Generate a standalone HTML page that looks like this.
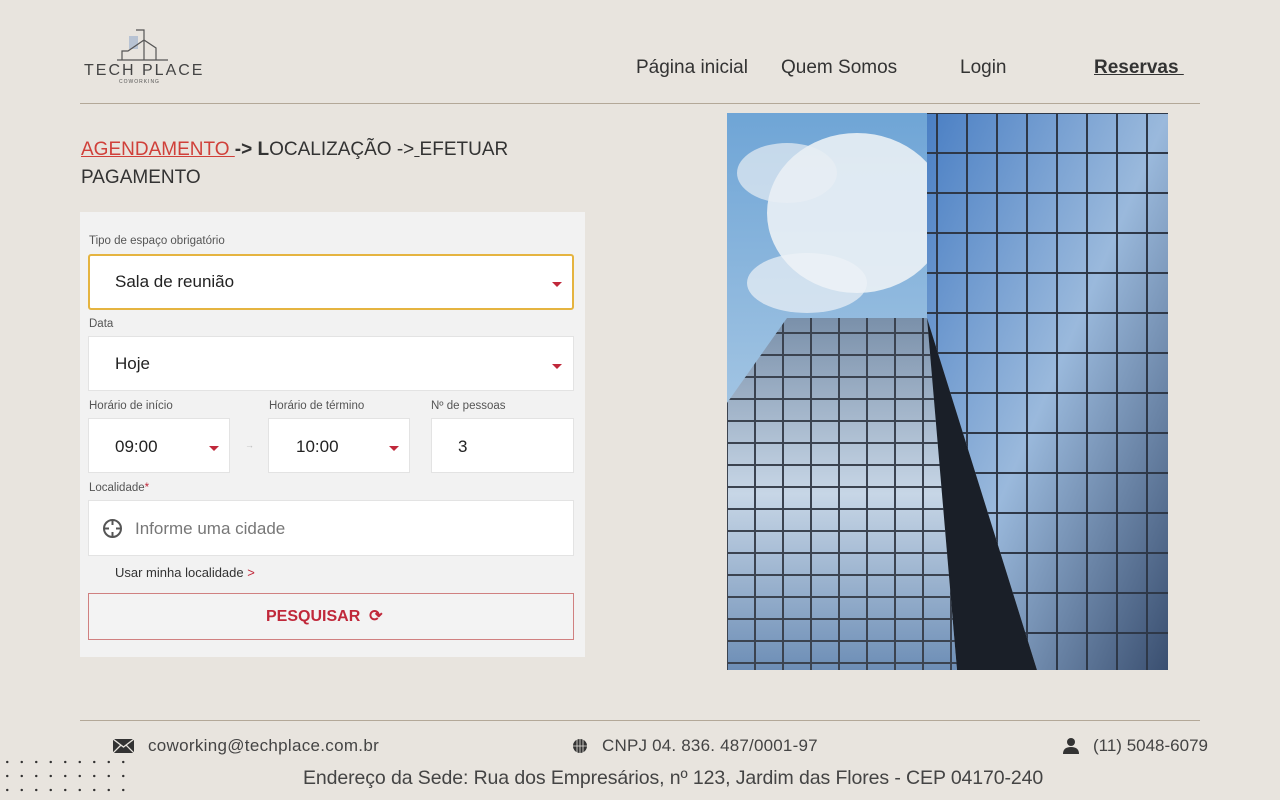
<!DOCTYPE html>
<html><head><meta charset="utf-8"><style>
*{margin:0;padding:0;box-sizing:border-box}
body{width:1280px;height:800px;background:#e8e4de;font-family:"Liberation Sans",sans-serif;color:#333;position:relative;overflow:hidden}
.a{position:absolute}
.nav{font-size:19px;color:#333;top:57px}
.lbl{font-size:11.5px;color:#555}
.box{background:#fff;border:1px solid #e3e3e3}
.val{font-size:17px;color:#222}
.car{width:0;height:0;border-left:5px solid transparent;border-right:5px solid transparent;border-top:5px solid #c0283a}
.ft{font-size:17px;color:#444}
</style></head><body>
<svg class="a" style="left:112px;top:28px" width="60" height="36" viewBox="0 0 60 36" fill="none" stroke="#555" stroke-width="1.2">
<rect x="17" y="8" width="9" height="13" fill="#b8c3d3" stroke="none"/>
<path d="M5 32 H10 V23 H16 L32 12 L44 20 V32 M24 2 H32 V32 M10 32 H56"/>
</svg>
<div class="a" style="left:84px;top:62px;font-size:16px;letter-spacing:2px;color:#444">TECH PLACE</div>
<div class="a" style="left:119px;top:79px;font-size:5px;letter-spacing:1px;color:#555">COWORKING</div>
<div class="a nav" style="left:636px">Página inicial</div>
<div class="a nav" style="left:781px">Quem Somos</div>
<div class="a nav" style="left:960px">Login</div>
<div class="a nav" style="left:1094px;text-decoration:underline;font-weight:bold;color:#333">Reservas&nbsp;</div>
<div class="a" style="left:80px;top:103px;width:1120px;height:1px;background:#b3a898"></div>
<div class="a" style="left:81px;top:136px;font-size:19px;line-height:28px;color:#333;width:470px"><span style="color:#d0403a;text-decoration:underline">AGENDAMENTO </span><b> -&gt; L</b>OCALIZAÇÃO -&gt;<u> </u>EFETUAR PAGAMENTO</div>
<div class="a" style="left:80px;top:212px;width:505px;height:445px;background:#f2f2f2"></div>
<div class="a lbl" style="left:89px;top:235px">Tipo de espaço obrigatório</div>
<div class="a box" style="left:88px;top:254px;width:486px;height:56px;border:2px solid #e5b440;border-radius:3px"></div>
<div class="a val" style="left:115px;top:272px">Sala de reunião</div>
<div class="a car" style="left:552px;top:282px"></div>
<div class="a lbl" style="left:89px;top:318px">Data</div>
<div class="a box" style="left:88px;top:336px;width:486px;height:55px"></div>
<div class="a val" style="left:115px;top:354px">Hoje</div>
<div class="a car" style="left:552px;top:364px"></div>
<div class="a lbl" style="left:89px;top:400px">Horário de início</div>
<div class="a lbl" style="left:269px;top:400px">Horário de término</div>
<div class="a lbl" style="left:431px;top:400px">Nº de pessoas</div>
<div class="a box" style="left:88px;top:418px;width:142px;height:55px"></div>
<div class="a val" style="left:115px;top:437px">09:00</div>
<div class="a car" style="left:209px;top:446px"></div>
<div class="a" style="left:245px;top:440px;font-size:9px;color:#bbb">→</div>
<div class="a box" style="left:268px;top:418px;width:142px;height:55px"></div>
<div class="a val" style="left:296px;top:437px">10:00</div>
<div class="a car" style="left:389px;top:446px"></div>
<div class="a box" style="left:431px;top:418px;width:143px;height:55px"></div>
<div class="a val" style="left:458px;top:437px">3</div>
<div class="a lbl" style="left:89px;top:482px">Localidade<span style="color:#c0283a">*</span></div>
<div class="a box" style="left:88px;top:500px;width:486px;height:56px"></div>
<svg class="a" style="left:102px;top:518px" width="21" height="21" viewBox="0 0 21 21" fill="none" stroke="#555" stroke-width="2"><circle cx="10.5" cy="10.5" r="8.5"/><path d="M10.5 2v5M10.5 14v5M2 10.5h5M14 10.5h5"/></svg>
<div class="a" style="left:135px;top:519px;font-size:17px;color:#777">Informe uma cidade</div>
<div class="a" style="left:115px;top:565px;font-size:13px;color:#333">Usar minha localidade <span style="color:#c0283a">&gt;</span></div>
<div class="a" style="left:88px;top:593px;width:486px;height:47px;border:1px solid #d08080;background:#f3f3f3"></div>
<div class="a" style="left:266px;top:606px;font-size:16px;font-weight:bold;color:#c0283a">PESQUISAR &nbsp;⟳</div>
<svg class="a" style="left:727px;top:113px" width="441" height="557" viewBox="0 0 441 557">
<defs>
<linearGradient id="sky" x1="0" y1="0" x2="0" y2="1"><stop offset="0" stop-color="#6fa5d6"/><stop offset="1" stop-color="#cfe0ee"/></linearGradient>
<linearGradient id="gl" x1="0" y1="0" x2="1" y2="1"><stop offset="0" stop-color="#4a7fc4"/><stop offset=".5" stop-color="#9ab9dc"/><stop offset="1" stop-color="#3a4f70"/></linearGradient>
<linearGradient id="gl2" x1="0" y1="0" x2="0" y2="1"><stop offset="0" stop-color="#7a90aa"/><stop offset=".5" stop-color="#c7d6e6"/><stop offset="1" stop-color="#6d8eb6"/></linearGradient>
<pattern id="grid" width="28" height="22" patternUnits="userSpaceOnUse"><rect width="28" height="22" fill="none" stroke="#3b4350" stroke-width="2"/></pattern>
<pattern id="grid2" width="30" height="40" patternUnits="userSpaceOnUse"><rect width="30" height="40" fill="none" stroke="#2e3848" stroke-width="2"/></pattern>
</defs>
<rect width="441" height="557" fill="url(#sky)"/>
<ellipse cx="130" cy="100" rx="90" ry="80" fill="#f1f4f7" opacity=".85"/>
<ellipse cx="60" cy="60" rx="50" ry="30" fill="#e8eef4" opacity=".7"/>
<ellipse cx="80" cy="170" rx="60" ry="30" fill="#eef2f6" opacity=".7"/>
<polygon points="0,290 60,205 200,205 230,557 0,557" fill="url(#gl2)"/>
<polygon points="0,290 60,205 200,205 230,557 0,557" fill="url(#grid)"/>
<polygon points="200,0 441,0 441,557 310,557 200,205" fill="url(#gl)"/>
<polygon points="200,0 441,0 441,557 310,557 200,205" fill="url(#grid2)"/>
<polygon points="200,205 230,557 310,557" fill="#1a1f28"/>
</svg>
<div class="a" style="left:80px;top:720px;width:1120px;height:1px;background:#b3a898"></div>
<svg class="a" style="left:113px;top:739px" width="21" height="14" viewBox="0 0 21 14"><rect width="21" height="14" fill="#333"/><path d="M0 0 L10.5 8 L21 0 M0 14 L8 6 M21 14 L13 6" stroke="#e8e4de" stroke-width="1.3" fill="none"/></svg>
<div class="a ft" style="left:148px;top:736px;letter-spacing:0.3px">coworking@techplace.com.br</div>
<svg class="a" style="left:572px;top:738px" width="16" height="16" viewBox="0 0 16 16"><circle cx="8" cy="8" r="7" fill="#333"/><path d="M1 8h14M8 1v14M5 1.5v13M11 1.5v13" stroke="#e8e4de" stroke-width=".8"/></svg>
<div class="a ft" style="left:602px;top:736px;letter-spacing:0.2px">CNPJ 04. 836. 487/0001-97</div>
<svg class="a" style="left:1062px;top:737px" width="18" height="18" viewBox="0 0 18 18"><circle cx="9" cy="5" r="4" fill="#333"/><path d="M1 17 Q1 10 9 10 Q17 10 17 17Z" fill="#333"/></svg>
<div class="a ft" style="left:1093px;top:736px">(11) 5048-6079</div>
<div class="a" style="left:303px;top:767px;font-size:19.5px;color:#444;letter-spacing:-0.1px">Endereço da Sede: Rua dos Empresários, nº 123, Jardim das Flores - CEP 04170-240</div>
<div class="a" style="left:0px;top:755px;width:130px;height:42px;background-image:radial-gradient(circle,#333 1px,transparent 1.4px);background-size:14.5px 14px"></div>
</body></html>
